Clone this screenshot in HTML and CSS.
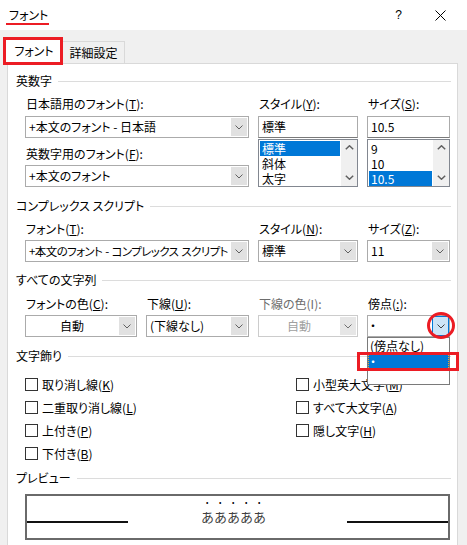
FILE: index.html
```html
<!DOCTYPE html>
<html lang="ja">
<head>
<meta charset="utf-8">
<title>フォント</title>
<link rel="stylesheet" href="styles.css">
</head>
<body>
<div class="dialog">
  <div class="titlebar">
    <span class="title">フォント</span>
    <span class="help">?</span>
    <svg class="close" width="11" height="11" viewBox="0 0 11 11"><path d="M0.5 0.5L10.5 10.5M10.5 0.5L0.5 10.5" stroke="#000" stroke-width="1" fill="none"/></svg>
  </div>
  <div class="tabs">
    <div class="tab active">フォント</div>
    <div class="tab">詳細設定</div>
  </div>
  <div class="panel">
    <div class="sec-head">英数字</div>
    <div class="grid3 g1">
      <div class="col">
        <div class="label">日本語用のフォント(<u>T</u>):</div>
        <div class="combo gap4"><span class="val">+本文のフォント - 日本語</span><span class="btn"><svg width="8" height="5" viewBox="0 0 8 5"><path d="M0.5 0.5L4 4L7.5 0.5" stroke="#606060" fill="none"/></svg></span></div>
        <div class="label mt8">英数字用のフォント(<u>F</u>):</div>
        <div class="combo gap3"><span class="val">+本文のフォント</span><span class="btn"><svg width="8" height="5" viewBox="0 0 8 5"><path d="M0.5 0.5L4 4L7.5 0.5" stroke="#606060" fill="none"/></svg></span></div>
      </div>
      <div class="col">
        <div class="label">スタイル(<u>Y</u>):</div>
        <div class="textbox gap4">標準</div>
        <div class="list">
          <div class="items"><div class="item sel">標準</div><div class="item">斜体</div><div class="item">太字</div></div>
          <div class="sbar"><svg width="9" height="5" viewBox="0 0 9 5"><path d="M0.8 4.3L4.5 0.8L8.2 4.3" stroke="#606060" stroke-width="1.5" fill="none"/></svg><svg width="9" height="5" viewBox="0 0 9 5"><path d="M0.8 0.7L4.5 4.2L8.2 0.7" stroke="#606060" stroke-width="1.5" fill="none"/></svg></div>
        </div>
      </div>
      <div class="col">
        <div class="label">サイズ(<u>S</u>):</div>
        <div class="textbox gap4">10.5</div>
        <div class="list">
          <div class="items"><div class="item">9</div><div class="item">10</div><div class="item sel">10.5</div></div>
          <div class="sbar"><svg width="9" height="5" viewBox="0 0 9 5"><path d="M0.8 4.3L4.5 0.8L8.2 4.3" stroke="#606060" stroke-width="1.5" fill="none"/></svg><svg width="9" height="5" viewBox="0 0 9 5"><path d="M0.8 0.7L4.5 4.2L8.2 0.7" stroke="#606060" stroke-width="1.5" fill="none"/></svg></div>
        </div>
      </div>
    </div>

    <div class="sec-head s2">コンプレックス スクリプト</div>
    <div class="grid3 g2">
      <div class="col">
        <div class="label">フォント(<u>T</u>):</div>
        <div class="combo gap3"><span class="val tight">+本文のフォント - コンプレックス スクリプト</span><span class="btn"><svg width="8" height="5" viewBox="0 0 8 5"><path d="M0.5 0.5L4 4L7.5 0.5" stroke="#606060" fill="none"/></svg></span></div>
      </div>
      <div class="col">
        <div class="label">スタイル(<u>N</u>):</div>
        <div class="combo gap3"><span class="val">標準</span><span class="btn"><svg width="8" height="5" viewBox="0 0 8 5"><path d="M0.5 0.5L4 4L7.5 0.5" stroke="#606060" fill="none"/></svg></span></div>
      </div>
      <div class="col">
        <div class="label">サイズ(<u>Z</u>):</div>
        <div class="combo gap3"><span class="val">11</span><span class="btn"><svg width="8" height="5" viewBox="0 0 8 5"><path d="M0.5 0.5L4 4L7.5 0.5" stroke="#606060" fill="none"/></svg></span></div>
      </div>
    </div>

    <div class="sec-head s3">すべての文字列</div>
    <div class="grid4">
      <div class="col">
        <div class="label">フォントの色(<u>C</u>):</div>
        <div class="combo gap3"><span class="val center">自動</span><span class="btn"><svg width="8" height="5" viewBox="0 0 8 5"><path d="M0.5 0.5L4 4L7.5 0.5" stroke="#606060" fill="none"/></svg></span></div>
      </div>
      <div class="col">
        <div class="label">下線(<u>U</u>):</div>
        <div class="combo gap3"><span class="val">(下線なし)</span><span class="btn"><svg width="8" height="5" viewBox="0 0 8 5"><path d="M0.5 0.5L4 4L7.5 0.5" stroke="#606060" fill="none"/></svg></span></div>
      </div>
      <div class="col">
        <div class="label disabled">下線の色(I):</div>
        <div class="combo gap3 disabled"><span class="val center">自動</span><span class="btn"><svg width="8" height="5" viewBox="0 0 8 5"><path d="M0.5 0.5L4 4L7.5 0.5" stroke="#707070" fill="none"/></svg></span></div>
      </div>
      <div class="col">
        <div class="label">傍点(<u>:</u>):</div>
        <div class="combo-wrap gap3">
          <div class="combo"><span class="val dot">・</span><span class="btn hot"><svg width="8" height="5" viewBox="0 0 8 5"><path d="M0.5 0.5L4 4L7.5 0.5" stroke="#404040" fill="none"/></svg></span></div>
          <div class="dropdown">
            <div class="ditem">(傍点なし)</div>
            <div class="ditem sel">・</div>
          </div>
          <div class="mark-box"></div>
          <div class="mark-circle"></div>
        </div>
      </div>
    </div>

    <div class="sec-head s4">文字飾り</div>
    <div class="checks">
      <div class="check"><span class="box"></span>取り消し線(<u>K</u>)</div>
      <div class="check"><span class="box"></span>小型英大文字(<u>M</u>)</div>
      <div class="check"><span class="box"></span>二重取り消し線(<u>L</u>)</div>
      <div class="check"><span class="box"></span>すべて大文字(<u>A</u>)</div>
      <div class="check"><span class="box"></span>上付き(<u>P</u>)</div>
      <div class="check"><span class="box"></span>隠し文字(<u>H</u>)</div>
      <div class="check"><span class="box"></span>下付き(<u>B</u>)</div>
    </div>

    <div class="sec-head s5">プレビュー</div>
    <div class="preview">
      <div class="pline"></div>
      <div class="ptext"><span class="emph">あああああ</span></div>
      <div class="pline"></div>
    </div>
  </div>
</div>
</body>
</html>
```

FILE: styles.css
```css
html, body {
  margin: 0;
  padding: 0;
  overflow: hidden;
}

body {
  background: #f0f0f0;
  font-family: "Noto Sans CJK JP", "Noto Sans", sans-serif;
  font-size: 12px;
  line-height: 16px;
  color: #000;
  font-feature-settings: "palt";
}

u {
  text-decoration: underline;
  text-underline-offset: 1px;
}

.dialog {
  width: 467px;
  height: 545px;
  overflow: hidden;
}

/* title bar */
.titlebar {
  height: 30px;
  background: #fff;
  display: flex;
  align-items: center;
  padding: 0 21px 0 9px;
  box-sizing: border-box;
}

.title {
  position: relative;
}

.title::after {
  content: "";
  position: absolute;
  left: -3px;
  right: -1px;
  bottom: -2px;
  height: 2px;
  background: #ec1c24;
}

.help {
  margin-left: auto;
  margin-right: 33px;
  font-family: "Liberation Sans", sans-serif;
  font-size: 12px;
}

.close {
  display: block;
}

/* tabs */
.tabs {
  display: flex;
  align-items: flex-end;
  height: 33px;
  padding-left: 5px;
  box-sizing: border-box;
}

.tab {
  width: 62px;
  height: 22px;
  box-sizing: border-box;
  border: 1px solid #d9d9d9;
  border-bottom: none;
  border-left: none;
  display: flex;
  align-items: center;
  justify-content: center;
  padding-top: 1px;
}

.tab.active {
  width: 58px;
  height: 27px;
  border-left: 1px solid #d9d9d9;
  background: #fff;
  position: relative;
  z-index: 2;
  margin-bottom: -1px;
  padding-top: 0;
}

.tab.active::after {
  content: "";
  position: absolute;
  left: -3px;
  top: -1px;
  width: 60px;
  height: 28px;
  border: 3px solid #ec1c24;
  box-sizing: border-box;
}

/* panel */
.panel {
  margin-left: 7px;
  width: 451px;
  height: 490px;
  box-sizing: border-box;
  border: 1px solid #d9d9d9;
  background: #fff;
  padding: 9px 6px 0 8px;
}

.sec-head {
  display: flex;
  align-items: center;
  height: 16px;
  white-space: nowrap;
}

.sec-head::after {
  content: "";
  flex: 1;
  height: 1px;
  background: #dcdcdc;
  margin-left: 6px;
}

.s2 { margin-top: 11px; }
.s3 { margin-top: 10px; }
.s4 { margin-top: 11px; }
.s5 { margin-top: 5px; }

.grid3 {
  display: grid;
  grid-template-columns: 224px 100px 83px;
  column-gap: 9px;
  margin-left: 9px;
}

.g1 { margin-top: 7px; }
.g2 { margin-top: 7px; }

.grid4 {
  display: grid;
  grid-template-columns: 112px 103px 100px 83px;
  column-gap: 9px;
  margin-left: 9px;
  margin-top: 8px;
}

.col {
  display: flex;
  flex-direction: column;
}

.label {
  height: 16px;
  padding-left: 1px;
  white-space: nowrap;
}

.label.disabled {
  color: #6d6d6d;
}

.mt8 { margin-top: 8px; }
.gap4 { margin-top: 4px; }
.gap3 { margin-top: 3px; }

/* combo boxes */
.combo {
  height: 22px;
  box-sizing: border-box;
  border: 1px solid #ababab;
  background: #fff;
  display: flex;
}

.combo .val {
  flex: 1;
  min-width: 0;
  display: flex;
  align-items: center;
  padding-left: 3px;
  white-space: nowrap;
  overflow: hidden;
}

.combo .val.tight {
  font-size: 11.5px;
  letter-spacing: -0.6px;
  word-spacing: 1px;
  padding-left: 3px;
}

.combo .val.center {
  justify-content: center;
  padding-left: 0;
}

.combo .val.dot {
  padding-left: 2px;
}

.combo .btn {
  width: 16px;
  margin: 1px;
  background: #e1e1e1;
  display: flex;
  align-items: center;
  justify-content: center;
  flex: none;
}

.combo .btn.hot {
  margin: 0;
  width: 17px;
  background: #cce4f7;
  border: 1px solid #0078d7;
  box-sizing: border-box;
}

.combo.disabled {
  border-color: #cccccc;
  color: #a0a0a0;
}

.combo.disabled .btn {
  background: #e6e6e6;
}

.textbox {
  height: 22px;
  box-sizing: border-box;
  border: 1px solid #ababab;
  border-bottom-color: #7a7a7a;
  padding-left: 3px;
  display: flex;
  align-items: center;
  background: #fff;
}

/* list boxes */
.list {
  height: 48px;
  margin-top: 1px;
  box-sizing: border-box;
  border: 1px solid #828790;
  display: flex;
}

.items {
  flex: 1;
  padding: 1px 1px 0 1px;
}

.item {
  height: 15px;
  line-height: 15px;
  padding-left: 2px;
  white-space: nowrap;
  overflow: hidden;
}

.item.sel {
  background: #0078d7;
  color: #fff;
}

.sbar {
  width: 16px;
  background: #f0f0f0;
  display: flex;
  flex-direction: column;
  align-items: center;
  justify-content: space-between;
  padding: 5px 0 6px;
  box-sizing: border-box;
}

.sbar svg {
  display: block;
}

/* dropdown overlay */
.combo-wrap {
  position: relative;
}

.dropdown {
  position: absolute;
  left: 0;
  top: 22px;
  width: 83px;
  height: 48px;
  box-sizing: border-box;
  border: 1px solid #7a7a7a;
  background: #fff;
  z-index: 5;
}

.ditem {
  height: 16px;
  line-height: 16px;
  padding-left: 2px;
  white-space: nowrap;
}

.ditem.sel {
  background: #0078d7;
  color: #fff;
  outline: 1px dotted #e8a33a;
  outline-offset: -1px;
}

.mark-box {
  position: absolute;
  left: -10px;
  top: 37px;
  width: 102px;
  height: 19px;
  border: 3px solid #ec1c24;
  box-sizing: border-box;
  z-index: 6;
}

.mark-circle {
  position: absolute;
  left: 60px;
  top: -3px;
  width: 28px;
  height: 27px;
  border: 3px solid #ec1c24;
  border-radius: 50%;
  box-sizing: border-box;
  z-index: 6;
}

/* checkboxes */
.checks {
  display: grid;
  grid-template-columns: 271px auto;
  margin-left: 9px;
  margin-top: 9px;
}

.check {
  height: 23px;
  display: flex;
  align-items: center;
  white-space: nowrap;
}

.box {
  width: 13px;
  height: 13px;
  box-sizing: border-box;
  border: 1px solid #333;
  background: #fff;
  margin-right: 4px;
  flex: none;
}

/* preview */
.preview {
  margin-left: 9px;
  margin-top: 8px;
  width: 425px;
  height: 46px;
  box-sizing: border-box;
  border: 2px solid #6a6a6a;
  display: flex;
  align-items: flex-start;
}

.pline {
  width: 101px;
  height: 2px;
  margin-top: 25px;
  background: #111;
  flex: none;
}

.ptext {
  flex: 1;
  text-align: center;
  padding-right: 8px;
  margin-top: 1px;
  font-size: 13px;
  line-height: 16px;
  font-feature-settings: normal;
}

.emph {
  color: #404040;
  -webkit-text-emphasis: filled dot;
  text-emphasis: filled dot;
  -webkit-text-emphasis-color: #000;
  text-emphasis-color: #000;
  -webkit-text-emphasis-position: over right;
  text-emphasis-position: over right;
}
```
